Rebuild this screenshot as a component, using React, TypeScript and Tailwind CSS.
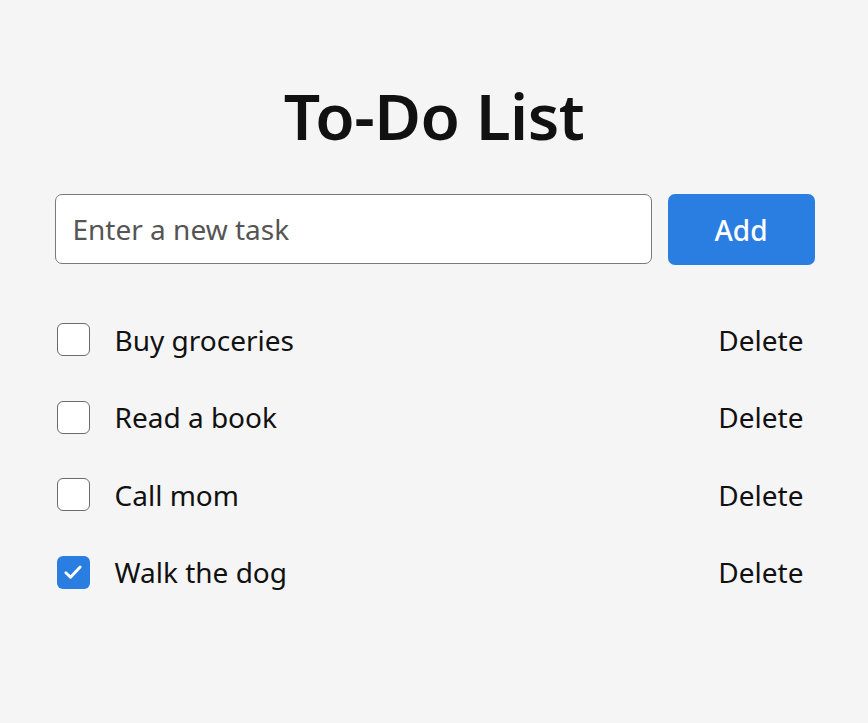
import { useState } from "react";

const initialTasks = [
  { id: 1, text: "Buy groceries", done: false },
  { id: 2, text: "Read a book", done: false },
  { id: 3, text: "Call mom", done: false },
  { id: 4, text: "Walk the dog", done: true },
];

export default function App() {
  const [tasks, setTasks] = useState(initialTasks);
  const [value, setValue] = useState("");

  const addTask = () => {
    if (!value.trim()) return;
    setTasks([...tasks, { id: Date.now(), text: value.trim(), done: false }]);
    setValue("");
  };

  return (
    <div
      className="min-h-[723px] w-full bg-[#f5f5f5] text-[#111]"
      style={{ fontFamily: '"Noto Sans", "Open Sans", sans-serif' }}
    >
      <div className="mx-auto w-[761px] pt-[76px]">
        <h1 className="text-center text-[64px] font-semibold leading-[80px] tracking-[-0.5px]">
          To-Do List
        </h1>

        <div className="mt-[38px] flex gap-4">
          <input
            value={value}
            onChange={(e) => setValue(e.target.value)}
            placeholder="Enter a new task"
            className="ml-px h-[70px] flex-1 rounded-[7px] border border-[#7a7a7a] bg-white px-[17px] text-[28px] text-[#222] outline-none placeholder:text-[#555]"
          />
          <button
            onClick={addTask}
            className="h-[71px] w-[147px] rounded-[7px] bg-[#2a7de1] text-[28px] font-medium text-white"
          >
            Add
          </button>
        </div>

        <ul className="mt-[36px] flex flex-col">
          {tasks.map((task) => (
            <li key={task.id} className="flex h-[77.5px] items-center pl-[3px] pr-[11px]">
              <button
                onClick={() =>
                  setTasks(
                    tasks.map((t) =>
                      t.id === task.id ? { ...t, done: !t.done } : t
                    )
                  )
                }
                className={
                  task.done
                    ? "flex h-[33px] w-[33px] items-center justify-center rounded-[6px] bg-[#2a7de1]"
                    : "h-[33px] w-[33px] rounded-[6px] border-[1.5px] border-[#6b6b6b] bg-white"
                }
              >
                {task.done && (
                  <svg width="26" height="26" viewBox="0 0 20 20" fill="none">
                    <path
                      d="M4.5 10.5l3.6 3.6 7.4-8"
                      stroke="white"
                      strokeWidth="2.2"
                      strokeLinecap="round"
                      strokeLinejoin="round"
                    />
                  </svg>
                )}
              </button>
              <span className="ml-[25px] flex-1 text-[28px]">{task.text}</span>
              <button
                onClick={() => setTasks(tasks.filter((t) => t.id !== task.id))}
                className="text-[28px] text-[#111]"
              >
                Delete
              </button>
            </li>
          ))}
        </ul>
      </div>
    </div>
  );
}
